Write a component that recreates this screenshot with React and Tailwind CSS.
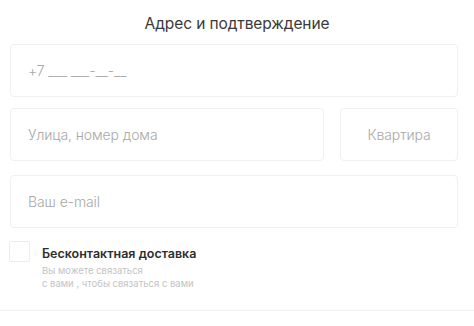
import React from 'react'

function Field({ placeholder, className = '' }) {
  return (
    <div className={`h-[53px] flex items-center px-[17px] rounded-[4px] border border-[#f0f0f0] ${className}`}>
      <span className="text-[14px] font-light text-[#a8a8a8] tracking-[-0.1px]">{placeholder}</span>
    </div>
  )
}

export default function App() {
  return (
    <div className="w-[474px] h-[326px] bg-white overflow-hidden font-['Inter','Noto_Sans',sans-serif]">
      <div className="pt-[12px] text-center text-[15.5px] text-[#3a3a3a] tracking-[-0.1px]">Адрес и подтверждение</div>

      <div className="px-[10px] pr-[16px] mt-[9px] flex flex-col gap-[11px]">
        <Field placeholder="+7 ___ ___-__-__" />
        <div className="flex gap-[16px]">
          <Field placeholder="Улица, номер дома" className="flex-1" />
          <Field placeholder="Квартира" className="w-[118px] justify-center" />
        </div>
        <Field placeholder="Ваш e-mail" className="mt-[3px]" />
      </div>

      <div className="flex gap-[12px] px-[9px] mt-[12px]">
        <div className="w-[21px] h-[21px] mt-[1px] rounded-[2px] border border-[#ececec]"></div>
        <div className="flex flex-col">
          <span className="text-[12.5px] font-semibold text-[#2e2e2e] leading-[16px] mt-[6px]">Бесконтактная доставка</span>
          <span className="text-[9.5px] text-[#c4c4c4] leading-[13px] mt-[2px]">Вы можете связаться</span>
          <span className="text-[9.5px] text-[#c4c4c4] leading-[13px]">с вами , чтобы связаться с вами</span>
        </div>
      </div>

      <div className="mt-[20px] border-t border-[#f0f0f0]"></div>
    </div>
  )
}
